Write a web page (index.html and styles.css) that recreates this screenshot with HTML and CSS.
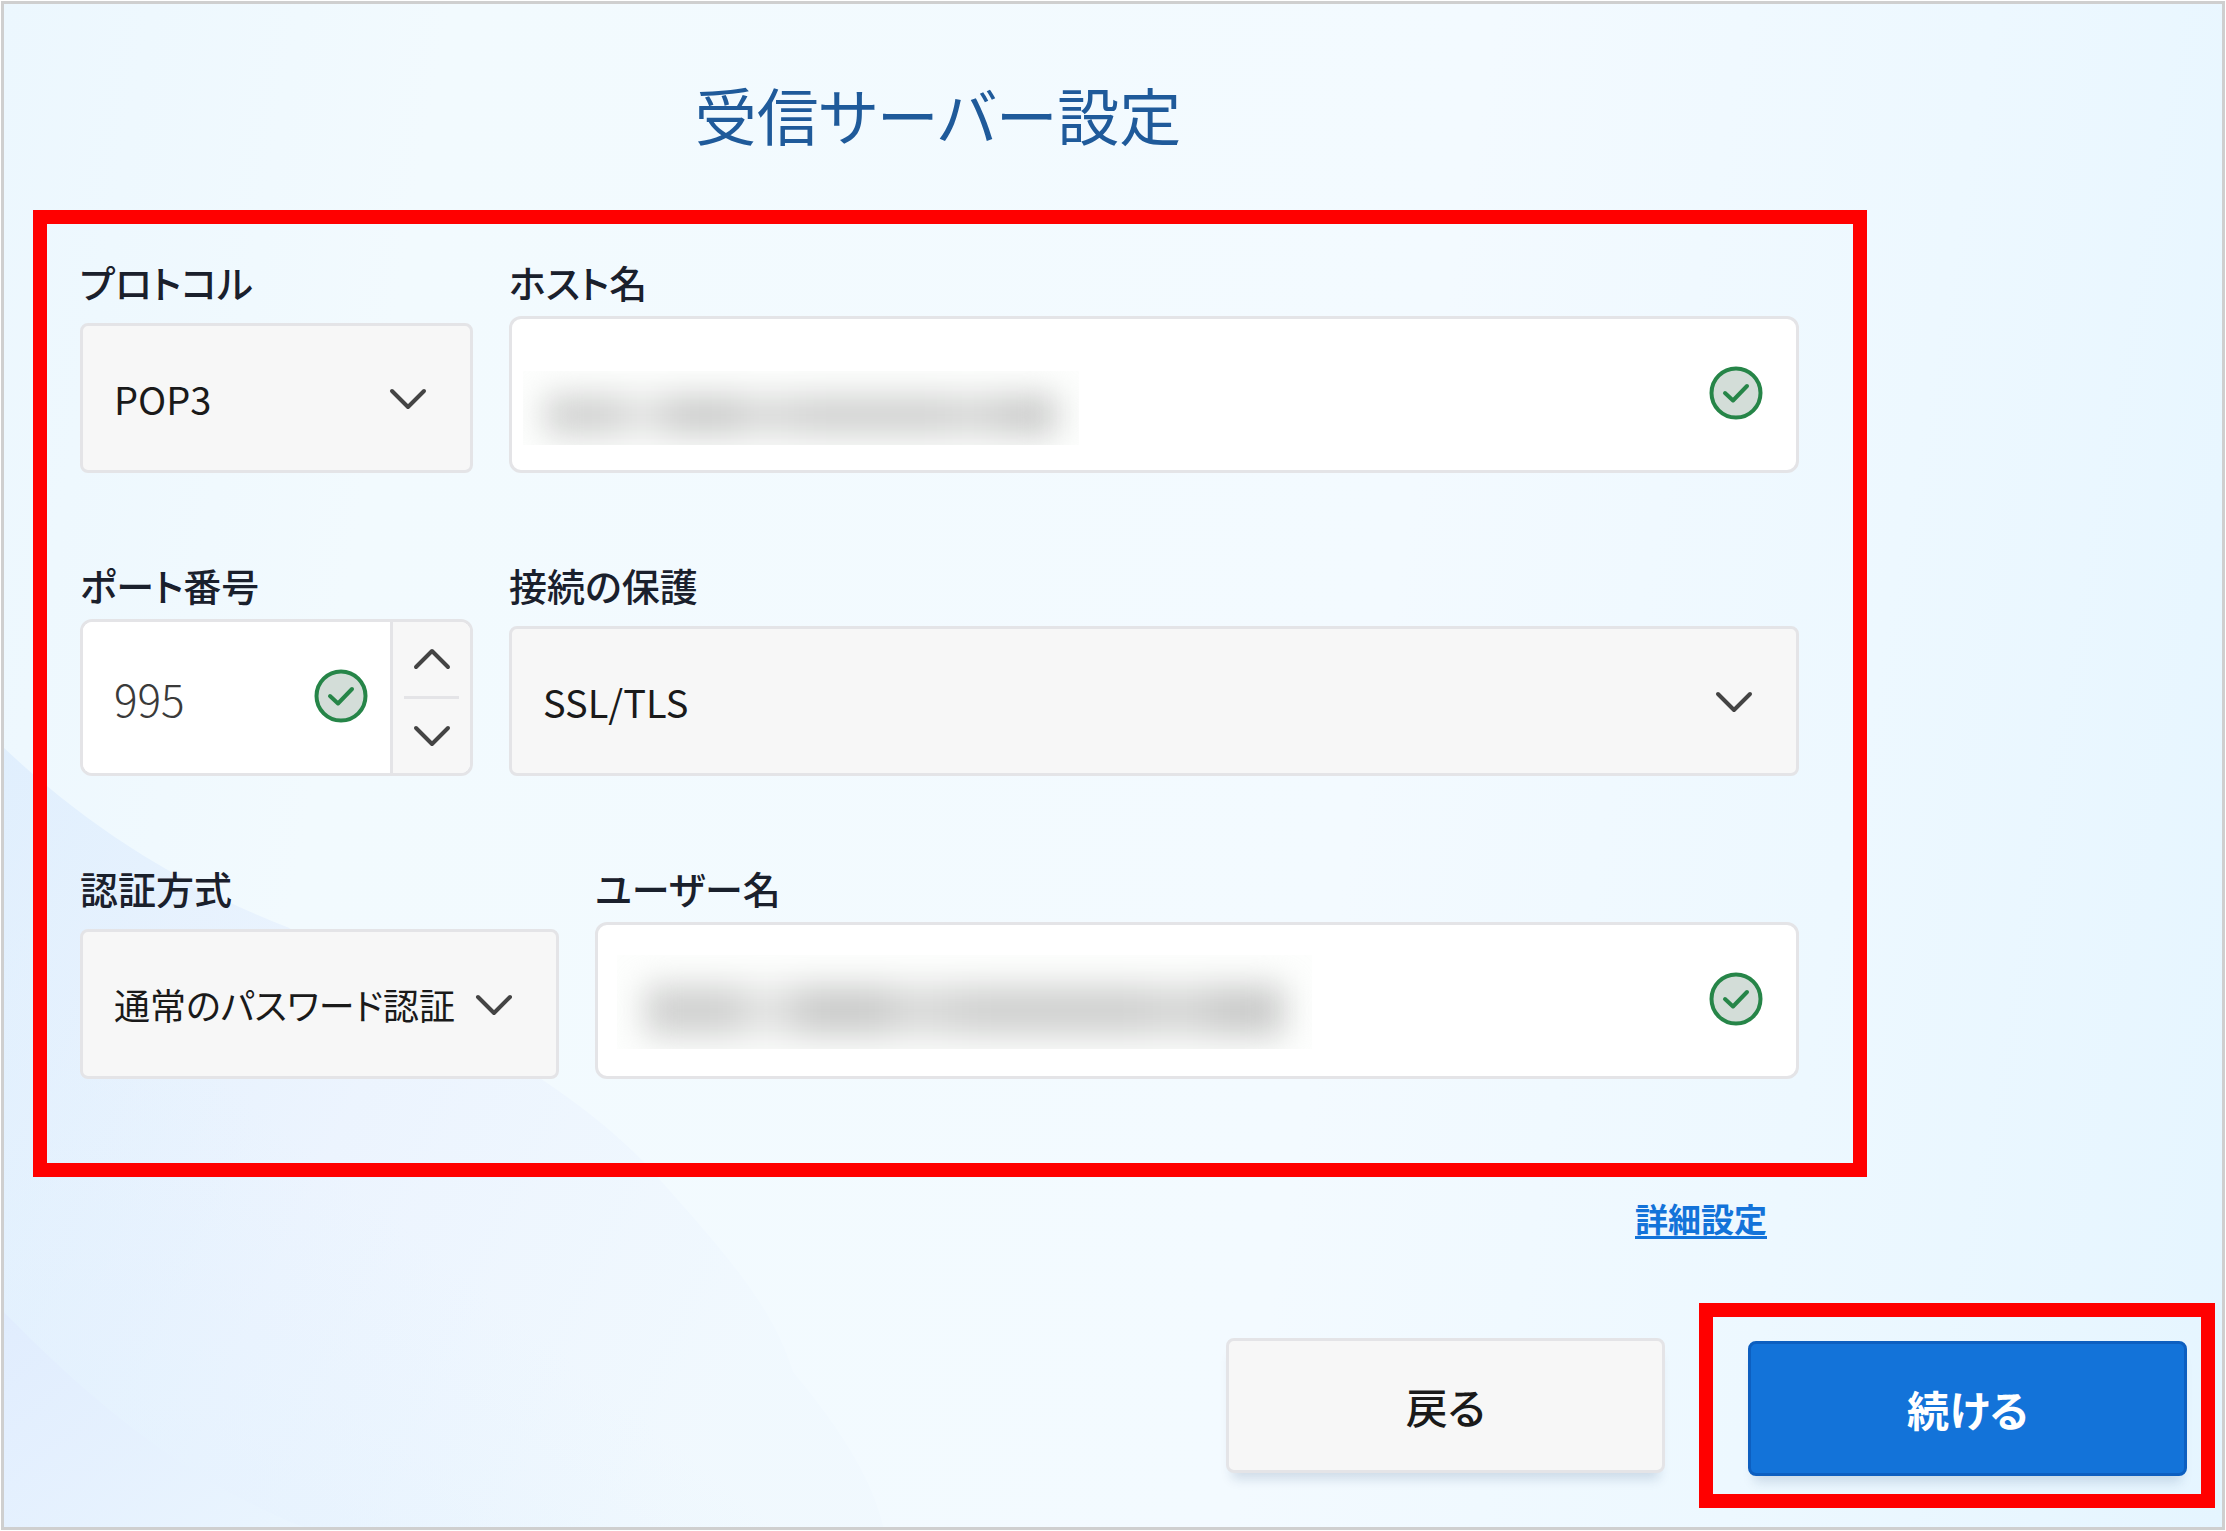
FILE: index.html
```html
<!DOCTYPE html>
<html lang="ja">
<head>
<meta charset="utf-8">
<meta name="viewport" content="width=device-width, initial-scale=1">
<title>受信サーバー設定</title>
<link rel="stylesheet" href="styles.css">
</head>
<body>
<svg class="symbols" aria-hidden="true">
  <symbol id="chevron" viewBox="0 0 40 24"><path d="M4 4 L20 20 L36 4" fill="none" stroke="currentColor" stroke-width="4" stroke-linecap="round" stroke-linejoin="round"/></symbol>
  <symbol id="valid" viewBox="0 0 54 54"><circle cx="27" cy="27" r="24.5" fill="#d3ddd8" stroke="#268548" stroke-width="4"/><path d="M16 27 L24 34.500 L38 20" fill="none" stroke="#268548" stroke-width="4" stroke-linecap="round" stroke-linejoin="round"/></symbol>
</svg>
<main class="wizard">
  <svg class="backdrop" viewBox="0 0 2220 1525" preserveAspectRatio="none" aria-hidden="true">
    <defs>
      <linearGradient id="swirl" x1="0" y1="0" x2="1" y2="0.4"><stop offset="0" stop-color="#dcecfd"/><stop offset="0.5" stop-color="#eaf2fe"/><stop offset="1" stop-color="#f0f8fe"/></linearGradient>
      <linearGradient id="swirl-low" x1="0" y1="0" x2="1" y2="1"><stop offset="0" stop-color="#e0ecfe"/><stop offset="1" stop-color="#eaf5fe"/></linearGradient>
      <linearGradient id="corner" x1="0" y1="1" x2="1" y2="0"><stop offset="0" stop-color="#dff0ff"/><stop offset="0.5" stop-color="#dff0ff" stop-opacity="0"/></linearGradient>
    </defs>
    <path d="M0 745 C80 820 170 880 285 925 C400 1000 560 1070 650 1170 C740 1270 770 1310 790 1370 C840 1430 870 1480 880 1525 L0 1525 Z" fill="url(#swirl)" opacity="0.75"/>
    <path d="M0 900 C200 1020 400 1060 560 1150 C680 1230 740 1290 780 1370 L780 1525 L0 1525 Z" fill="url(#corner)" opacity="0.6"/>
    <path d="M0 1310 C60 1370 160 1470 300 1525 L0 1525 Z" fill="url(#swirl-low)" opacity="0.9"/>
  </svg>
  <h1 class="title">受信サーバー設定</h1>
  <form class="settings" id="incoming">
    <div class="row">
      <div class="field">
        <label for="protocol">プロトコル</label>
        <div class="control">
          <select class="box select" id="protocol"><option>POP3</option><option>IMAP</option></select>
          <svg class="chevron mark"><use href="#chevron"/></svg>
        </div>
      </div>
      <div class="field">
        <label for="host">ホスト名</label>
        <div class="control">
          <input class="box input" id="host" type="text">
          <span class="redacted redacted-host"></span>
          <svg class="valid mark"><use href="#valid"/></svg>
        </div>
      </div>
    </div>
    <div class="row">
      <div class="field">
        <label for="port">ポート番号</label>
        <div class="control port">
          <div class="port-value">
            <input class="input port-input" id="port" type="text" inputmode="numeric" value="995">
            <svg class="valid mark"><use href="#valid"/></svg>
          </div>
          <div class="stepper">
            <button type="button" aria-label="増やす"><svg class="chevron up"><use href="#chevron"/></svg></button>
            <button type="button" aria-label="減らす"><svg class="chevron"><use href="#chevron"/></svg></button>
          </div>
        </div>
      </div>
      <div class="field">
        <label for="security">接続の保護</label>
        <div class="control">
          <select class="box select" id="security"><option>SSL/TLS</option><option>STARTTLS</option></select>
          <svg class="chevron mark"><use href="#chevron"/></svg>
        </div>
      </div>
    </div>
    <div class="row row-auth">
      <div class="field">
        <label for="auth">認証方式</label>
        <div class="control">
          <select class="box select long" id="auth"><option>通常のパスワード認証</option></select>
          <svg class="chevron mark"><use href="#chevron"/></svg>
        </div>
      </div>
      <div class="field">
        <label for="user">ユーザー名</label>
        <div class="control">
          <input class="box input" id="user" type="text">
          <span class="redacted redacted-user"></span>
          <svg class="valid mark"><use href="#valid"/></svg>
        </div>
      </div>
    </div>
  </form>
  <div class="more"><a href="#advanced">詳細設定</a></div>
  <div class="actions">
    <button class="button" type="button">戻る</button>
    <div class="callout"><button class="button primary" type="submit" form="incoming">続ける</button></div>
  </div>
</main>
</body>
</html>
```
FILE: styles.css
```css
* { box-sizing: border-box; }

body {
  margin: 0;
  padding: 1px;
  background: #fff;
  color: #1a1a1a;
  font-family: "Noto Sans CJK JP", sans-serif;
  font-feature-settings: "palt";
}

button, input, select { font: inherit; font-feature-settings: inherit; color: inherit; }

.symbols { display: none; }

.wizard {
  position: relative;
  display: flex;
  flex-direction: column;
  min-height: calc(100vh - 2px);
  padding: 62px 7px 19px 29px;
  border: 3px solid #cfcfcf;
  background: linear-gradient(100deg, #ecf7fe 0%, #f2fafe 18%, #f3faff 60%, #edf8ff 80%, #e5f5ff 100%);
  isolation: isolate;
}

.backdrop {
  position: absolute;
  inset: 0;
  z-index: -1;
  width: 100%;
  height: 100%;
}

.title {
  margin: 0 372px 48px 0;
  color: #1f5a9a;
  font-size: 62px;
  font-weight: 400;
  line-height: 96px;
  text-align: center;
}

.settings {
  display: flex;
  flex-direction: column;
  gap: 86px;
  margin-right: 348px;
  padding: 32px 54px 84px 33px;
  border: 14px solid #f00;
}

.row {
  display: grid;
  grid-template-columns: 393px 1fr;
  gap: 36px;
  height: 217px;
}

.row-auth { grid-template-columns: 479px 1fr; }

.field {
  display: flex;
  flex-direction: column;
  justify-content: space-between;
}

.field label {
  color: #1a202c;
  font-size: 38px;
  font-weight: 500;
  line-height: 52px;
}

.control { position: relative; display: flex; }

.box {
  width: 100%;
  border: 3px solid #e4e4e7;
  border-radius: 8px;
}

.select {
  height: 150px;
  padding: 0 80px 0 31px;
  background: #f7f7f7;
  font-size: 38px;
  appearance: none;
}

.select.long { padding-right: 0; font-size: 36px; }

.input {
  height: 157px;
  padding: 0 100px 0 31px;
  background: #fff;
  font-size: 38px;
}

.box.input { border-radius: 12px; }

.chevron { width: 40px; height: 24px; color: #444; }
.up { transform: rotate(180deg); }
.valid { width: 54px; height: 54px; }

.mark { position: absolute; pointer-events: none; }
.chevron.mark { right: 45px; top: 64px; }
.valid.mark { right: 36px; top: 50px; }

.redacted {
  position: absolute;
  overflow: hidden;
  background: #fdfefd;
}

.redacted::before {
  content: "";
  position: absolute;
  inset: 32% 4% 14%;
  background: linear-gradient(90deg, #d0d1d0 0 13%, #e4e5e4 18% 20%, #cbcccb 26% 36%, #dbdcdb 42%, #d0d1d0 53% 76%, #d8d9d8 84%, #cacbca 91% 100%);
  filter: blur(16px);
}

.redacted-host { left: 14px; top: 55px; width: 556px; height: 74px; }
.redacted-user { left: 22px; top: 33px; width: 695px; height: 94px; }

.port {
  height: 157px;
  overflow: hidden;
  border: 3px solid #e4e4e7;
  border-radius: 12px;
  background: #fff;
}

.port-value { position: relative; flex: 1; }

.port-input {
  width: 100%;
  height: 151px;
  padding: 0 100px 0 31px;
  border: 0;
  color: #3a3a3a;
  font-size: 44px;
  font-weight: 300;
}

.port .valid.mark { right: 22px; top: 47px; }

.stepper {
  display: flex;
  flex-direction: column;
  width: 80px;
  padding: 0 11px;
  border-left: 3px solid #e4e4e7;
  background: #f7f7f7;
}

.stepper button {
  display: flex;
  flex: 1;
  align-items: center;
  justify-content: center;
  padding: 0;
  border: 0;
  background: none;
}

.stepper button + button { border-top: 3px solid #e4e4e7; }

.more {
  margin-right: 448px;
  padding: 16px 0;
  text-align: right;
}

.more a {
  color: #1373d9;
  font-size: 33px;
  font-weight: 700;
  line-height: 50px;
  text-decoration-thickness: 3px;
  text-underline-offset: 4px;
}

.actions {
  display: flex;
  align-items: center;
  justify-content: flex-end;
  gap: 34px;
  margin-top: auto;
}

.callout { padding: 24px 14px 18px 35px; border: 14px solid #f00; }

.button {
  display: block;
  width: 439px;
  height: 135px;
  border: 3px solid #e4e4e7;
  border-radius: 8px;
  background: #f7f7f7;
  box-shadow: 0 12px 12px -6px #00306026;
  font-size: 42px;
  font-weight: 500;
}

.primary { border-color: #0d5fc0; background: #1373d9; color: #fff; font-weight: 700; }
```
